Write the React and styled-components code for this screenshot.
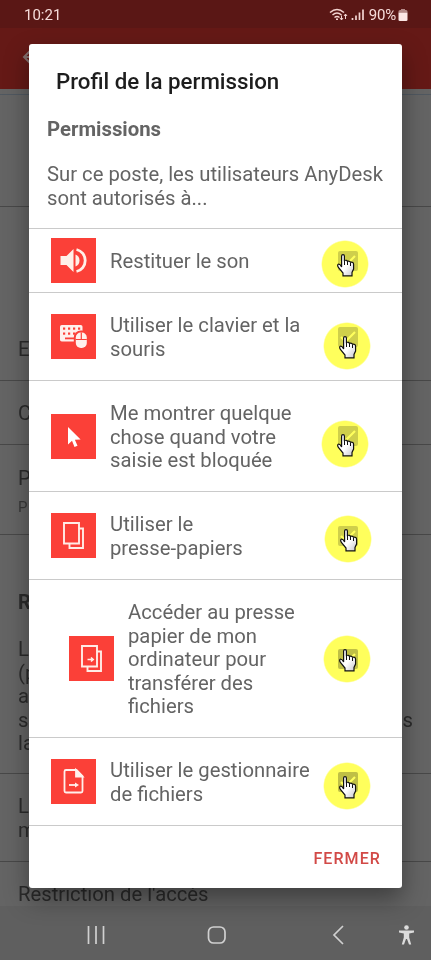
import styled, { createGlobalStyle } from 'styled-components'

const GlobalStyle = createGlobalStyle`
  * {
    box-sizing: border-box;
  }

  body {
    margin: 0;
    font-family: Roboto, 'Liberation Sans', sans-serif;
    background: #646464;
  }
`

const Screen = styled.div`
  position: relative;
  display: flex;
  flex-direction: column;
  width: 431px;
  height: 960px;
  overflow: hidden;
  background: #646464;
`

const StatusBar = styled.header`
  display: flex;
  flex: none;
  align-items: center;
  justify-content: space-between;
  height: 28px;
  padding: 2px 23px 0 24px;
  background: #5a1715;
  color: #f6dcda;
  font-size: 15px;
`

const StatusIcons = styled.div`
  display: flex;
  align-items: center;

  span {
    margin: 0 2px 0 4px;
    letter-spacing: -0.2px;
  }
`

const AppBar = styled.div`
  display: flex;
  flex: none;
  align-items: center;
  height: 61px;
  padding: 0 0 3px 22px;
  background: #651916;
`

const Settings = styled.main`
  flex: none;
  height: 817px;
  padding-top: 5px;
  overflow: hidden;
  color: #2b2b2b;
  font-size: 20.25px;
  line-height: 23.6px;
`

const Setting = styled.section`
  display: flex;
  flex-direction: column;
  justify-content: ${(props) => props.$align || 'center'};
  height: ${(props) => props.$height}px;
  padding: ${(props) => props.$top || 0}px 18px ${(props) => props.$bottom || 0}px;
  border-bottom: 1px solid #484848;

  h2 {
    margin: 0 0 24px;
    font-size: 20px;
    line-height: 24px;
  }

  small {
    margin-top: 5px;
    color: #383838;
    font-size: 15px;
  }
`

const FirstSetting = styled(Setting)`
  border-top: 1px solid #505860;
`

const Line = styled.div`
  display: flex;
  justify-content: space-between;
`

const NavBar = styled.nav`
  display: grid;
  flex: none;
  grid-template-columns: 119px 126px 66px 17px;
  align-items: center;
  height: 54px;
  padding: 4px 0 0 87px;
  background: #5f5f5f;
`

const Overlay = styled.div`
  position: absolute;
  inset: 0;
  padding: 44px 29px 0;
`

const Dialog = styled.div`
  display: flex;
  flex-direction: column;
  height: 844px;
  border-radius: 3px;
  background: #fff;
  color: #646464;
  box-shadow: 0 11px 24px rgba(0, 0, 0, 0.38);
`

const DialogHeader = styled.div`
  flex: none;
  height: 184px;
  padding: 23px 18px 0;
  font-size: 20.25px;
  line-height: 23.6px;

  h1 {
    margin: 0 0 0 9px;
    color: #1d1d1d;
    font-size: 22.3px;
    font-weight: 500;
    line-height: 28px;
  }

  h2 {
    margin: 22px 0 22px;
    font-size: 20.35px;
    font-weight: 700;
    line-height: 24px;
  }

  p {
    margin: 0;
    white-space: pre;
  }
`

const PermissionRow = styled.div`
  display: flex;
  flex: none;
  align-items: center;
  height: ${(props) => props.$height}px;
  padding: 0 44px 0 ${(props) => (props.$nested ? 40 : 22)}px;
  border-top: 1px solid #cacaca;
`

const IconTile = styled.div`
  flex: none;
  width: 45px;
  height: 45px;
  background: #fb4038;

  svg {
    display: block;
  }
`

const Label = styled.div`
  flex: 1;
  margin-left: 14px;
  padding-top: 3px;
  font-size: 20.25px;
  line-height: 23.6px;
  white-space: pre;
`

const CheckArea = styled.div`
  position: relative;
  flex: none;
  width: 20px;
  height: 20px;
`

const Checkbox = styled.div`
  width: 20px;
  height: 20px;
  border-radius: 2px;
  background: ${(props) => (props.$dark ? '#bfbfbf' : '#cfcfcf')};

  svg {
    display: block;
  }
`

// Yellow click marker lying over the checkbox
const Highlight = styled.div`
  position: absolute;
  left: ${(props) => props.$x - 24}px;
  top: ${(props) => props.$y - 24}px;
  width: 48px;
  height: 48px;
  border-radius: 50%;
  background: radial-gradient(circle, #ffff5c 0 22.5px, rgba(255, 255, 92, 0) 24px);
  mix-blend-mode: multiply;
`

const Pointer = styled.svg`
  position: absolute;
  left: ${(props) => props.$x - 8}px;
  top: ${(props) => props.$y - 10}px;
`

const DialogActions = styled.div`
  display: flex;
  flex: 1;
  align-items: center;
  justify-content: flex-end;
  padding: 2px 21px 0;
  border-top: 1px solid #cacaca;
`

const CloseButton = styled.button`
  padding: 0;
  border: 0;
  background: none;
  color: #d24a47;
  font: 500 16px Roboto, sans-serif;
  letter-spacing: 1.1px;
`

const SoundIcon = () => (
  <svg width="45" height="45" fill="#fff0e8">
    <path d="M9.5 18h6l7-7v23l-7-7h-6z" />
    <path d="M24.5 16.5a6.5 6.5 0 0 1 0 12z" />
    <path d="M25.5 11.5a11.3 11.3 0 0 1 0 22" fill="none" stroke="#fff0e8" strokeWidth="2.8" />
  </svg>
)

const KeyboardIcon = () => (
  <svg width="45" height="45" fill="#fff0ec">
    <rect x="9" y="11" width="22.5" height="16.5" rx="1.8" />
    <g fill="#fb4038">
      {[12, 17, 22, 27].map((x) => (
        <rect key={x} x={x} y="13.5" width="2.2" height="2.2" />
      ))}
      {[12, 17, 22, 27].map((x) => (
        <rect key={x} x={x} y="18.5" width="2.2" height="2.2" />
      ))}
      <rect x="14" y="23.5" width="10" height="1.8" />
      <rect x="22.8" y="16.5" width="15" height="20" rx="7" />
    </g>
    <rect x="24.8" y="18.5" width="11" height="15.5" rx="5" />
    <path d="M24.8 25.5h11M30.3 18.5v7" stroke="#fb4038" strokeWidth="1.2" />
  </svg>
)

const ArrowIcon = () => (
  <svg width="45" height="45" fill="#fff">
    <path d="M17 13v17.5l4-3.8 2.5 6.3 3-1.2-2.6-6.1 5.7-.3z" />
  </svg>
)

const ClipboardIcon = ({ arrow }) => (
  <svg width="45" height="45" fill="none" stroke="#ffece6" strokeWidth="1.9">
    <path d="M13 10h15v20.5H13z" />
    <path d="M28 15.5h4V35H18.500v-4.5" />
    {arrow && <path d="M18.5 23.5h5M22 21.5l2.2 2-2.2 2" strokeWidth="1.6" />}
  </svg>
)

const FileIcon = () => (
  <svg width="45" height="45" fill="none" stroke="#fff0ec" strokeWidth="1.8">
    <path d="M15 11h10.5l6 6v15a1.5 1.5 0 0 1-1.5 1.5H15a1.5 1.5 0 0 1-1.5-1.5V12.5a1.5 1.5 0 0 1 1.5-1.5z" />
    <path d="M25 11v6.5h6.5z" fill="#fff0ec" />
    <path d="M18 26h7" />
    <path d="M24 23.5l4 2.5-4 2.5z" fill="#fff0ec" stroke="none" />
  </svg>
)

const Hand = ({ x, y }) => (
  <Pointer $x={x} $y={y} width="18" height="23">
    <defs>
      <linearGradient id="hand" x2="1" y2="1">
        <stop offset=".55" stopColor="#fff" />
        <stop offset="1" stopColor="#c4c4cc" />
      </linearGradient>
    </defs>
    <path
      d="M4.6 13V2q0-1.4 1.4-1.4T7.4 2v4.5q2.7-.8 3 .8 2.6-.6 3 .9 3.2-.4 3.2 2.2V15l-1.6 3.5v3.3H6V19L1.4 13.5Q0 11 1.2 10.3q1.6-.7 3.4 2.7z"
      fill="url(#hand)"
      stroke="#111"
      strokeWidth="1.2"
    />
    <path d="M7.5 6v5M10.5 7.5V11M13.5 8.5V12" stroke="#111" />
  </Pointer>
)

const permissions = [
  { label: 'Restituer le son', icon: <SoundIcon />, height: 64, x: 7, y: 13.5 },
  { label: 'Utiliser le clavier et la\nsouris', icon: <KeyboardIcon />, height: 88, x: 9, y: 19.5 },
  {
    label: 'Me montrer quelque\nchose quand votre\nsaisie est bloquée',
    icon: <ArrowIcon />,
    height: 111,
    x: 7,
    y: 18,
  },
  { label: 'Utiliser le\npresse-papiers', icon: <ClipboardIcon />, height: 88, x: 10, y: 13.5 },
  {
    label: 'Accéder au presse\npapier de mon\nordinateur pour\ntransférer des\nfichiers',
    icon: <ClipboardIcon arrow />,
    height: 158,
    x: 9,
    y: 10.5,
    nested: true,
    dark: true,
  },
  {
    label: 'Utiliser le gestionnaire\nde fichiers',
    icon: <FileIcon />,
    height: 88,
    x: 9,
    y: 14.5,
    dark: true,
  },
]

const App = () => {
  return (
    <Screen>
      <GlobalStyle />
      <StatusBar>
        <div>10:21</div>
        <StatusIcons>
          <svg width="36" height="16" fill="none" stroke="#f3d4d1" strokeWidth="1.5">
            <path d="M1 5.500q7-6 14 0M3.500 8q4.500-4 9 0M5.500 10.500q2.500-2 5 0" />
            <path d="M8 11.5v1.5" strokeWidth="2" />
            <path d="M12.5 8.5V13m-1.5-2 1.5 2 1.5-2M16.5 12V7m-1.5 2 1.5-2 1.5 2" strokeWidth="1" />
            <path d="M23.5 11v2M27 8.5V13M30.5 5.5V13M34 2.5V13" strokeWidth="1.7" />
          </svg>
          <span>90%</span>
          <svg width="10" height="14" fill="#fbe6e4">
            <path d="M3 1h4v1h1q1.5 0 1.5 1.5v1H.5v-1Q.5 2 2 2h1z" fill="#b58a88" />
            <path d="M.5 4.5h9v7.2q0 1.3-1.3 1.3H1.8Q.5 13 .5 11.7z" />
          </svg>
        </StatusIcons>
      </StatusBar>
      <AppBar>
        <svg width="16" height="14" fill="none" stroke="#84706e" strokeWidth="2">
          <path d="M8 1 2 7l6 6M2 7h14" />
        </svg>
      </AppBar>
      <Settings>
        <FirstSetting $height={113} />
        <Setting $height={174} $align="flex-end" $bottom={18}>
          E
        </Setting>
        <Setting $height={64} $top={3}>
          C
        </Setting>
        <Setting $height={90} $top={7}>
          P<small>P</small>
        </Setting>
        <Setting $height={239} $align="flex-end" $bottom={17}>
          <h2>R</h2>
          <Line>L</Line>
          <Line>(p</Line>
          <Line>a</Line>
          <Line>
            <span>s</span>
            <span>s</span>
          </Line>
          <Line>la</Line>
        </Setting>
        <Setting $height={88} $top={2}>
          <Line>L</Line>
          <Line>m</Line>
        </Setting>
        <Setting $height={64} $top={3}>
          Restriction de l'accès
        </Setting>
      </Settings>
      <NavBar>
        <svg width="18" height="18" stroke="#d0d0d0" strokeWidth="1.7">
          <path d="M1.5 0v18M9 0v18M16.5 0v18" />
        </svg>
        <svg width="20" height="18" fill="none" stroke="#d0d0d0" strokeWidth="1.7">
          <rect x="2.5" y="1" width="16.5" height="16" rx="5" />
        </svg>
        <svg width="12" height="20" fill="none" stroke="#d0d0d0" strokeWidth="1.7">
          <path d="M11 1 2 10l9 9" />
        </svg>
        <svg width="17" height="20" fill="#dcdcdc">
          <circle cx="8.5" cy="2.5" r="2.3" />
          <path d="M1 5.5h15v2l-4.8.9v4.1l2 7H11l-2-5.5H8l-2 5.5H3.8l2-7V8.4L1 7.5z" />
        </svg>
      </NavBar>
      <Overlay>
        <Dialog>
          <DialogHeader>
            <h1>Profil de la permission</h1>
            <h2>Permissions</h2>
            <p>{'Sur ce poste, les utilisateurs AnyDesk\nsont autorisés à...'}</p>
          </DialogHeader>
          {permissions.map((item) => (
            <PermissionRow key={item.label} $height={item.height} $nested={item.nested}>
              <IconTile>{item.icon}</IconTile>
              <Label>{item.label}</Label>
              <CheckArea>
                <Checkbox $dark={item.dark}>
                  <svg width="20" height="20" fill="none" stroke="#fff" strokeWidth="2.2">
                    <path d="m3 10 4.5 4.5L17 5" />
                  </svg>
                </Checkbox>
                <Highlight $x={item.x} $y={item.y} />
                <Hand x={item.x} y={item.y} />
              </CheckArea>
            </PermissionRow>
          ))}
          <DialogActions>
            <CloseButton type="button">FERMER</CloseButton>
          </DialogActions>
        </Dialog>
      </Overlay>
    </Screen>
  )
}

export default App
